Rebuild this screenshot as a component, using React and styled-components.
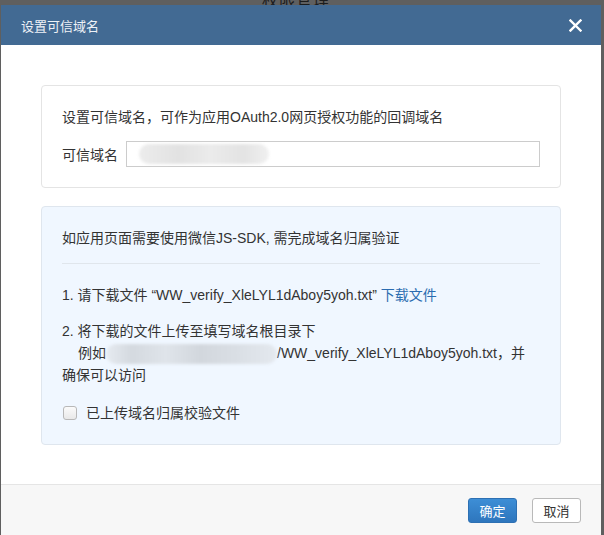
import React from 'react'
import styled, {createGlobalStyle} from 'styled-components';

const GlobalStyle = createGlobalStyle`
  html, body {
    margin: 0;
    padding: 0;
    height: 100%;
    background: #5f5f5f;
    overflow: hidden;
  }
  body {
    font-family: "Liberation Sans", "Noto Sans CJK SC", sans-serif;
    color: #333;
  }
`;

const CloseIcon = () => (
    <svg width="13" height="13" viewBox="0 0 13 13">
        <path d="M1.5 1.5 L11.5 11.5 M11.5 1.5 L1.5 11.5" stroke="#fff" strokeWidth="2.4" strokeLinecap="square"/>
    </svg>
)

const App = () => {
    return (
        <Page>
            <GlobalStyle/>
            <Backdrop>权限管理</Backdrop>
            <Dialog>
                <Header>
                    <Title>设置可信域名</Title>
                    <Close><CloseIcon/></Close>
                </Header>
                <Body>
                    <Card>
                        <Line>设置可信域名，可作为应用OAuth2.0网页授权功能的回调域名</Line>
                        <Field>
                            <Label>可信域名</Label>
                            <Input>
                                <Blur width={130} tone="light"/>
                            </Input>
                        </Field>
                    </Card>
                    <Card tinted>
                        <Line>如应用页面需要使用微信JS-SDK, 需完成域名归属验证</Line>
                        <Divider/>
                        <Step>
                            1. 请下载文件 “WW_verify_XleLYL1dAboy5yoh.txt” <Link>下载文件</Link>
                        </Step>
                        <Step gap={14}>
                            2. 将下载的文件上传至填写域名根目录下<br/>
                            <Indent>例如</Indent><Blur width={171}/>/WW_verify_XleLYL1dAboy5yoh.txt，并<br/>
                            确保可以访问
                        </Step>
                        <Check>
                            <Box/>
                            <span>已上传域名归属校验文件</span>
                        </Check>
                    </Card>
                </Body>
                <Footer>
                    <Button primary>确定</Button>
                    <Button>取消</Button>
                </Footer>
            </Dialog>
        </Page>
    )
}

const Page = styled.div`
  position: relative;
  height: 100vh;
  padding: 5px 3px 0 1px;
  box-sizing: border-box;
`;

const Backdrop = styled.div`
  position: absolute;
  top: -13px;
  left: 262px;
  font-size: 16px;
  color: #1c1c1c;
  letter-spacing: 1px;
`;

const Dialog = styled.div`
  position: relative;
  width: 600px;
  background: #fff;
  display: flex;
  flex-direction: column;
`;

const Header = styled.div`
  height: 40px;
  background: #426a93;
  display: flex;
  align-items: center;
  justify-content: space-between;
  padding: 0 19px 0 20px;
`;

const Title = styled.div`
  color: #eef2f7;
  font-size: 13px;
`;

const Close = styled.div`
  display: flex;
  align-items: center;
  cursor: pointer;
`;

const Body = styled.div`
  padding: 40px 40px 40px 40px;
  display: flex;
  flex-direction: column;
  gap: 18px;
  height: 439px;
  box-sizing: border-box;
`;

const Card = styled.div`
  border: 1px solid ${p => p.tinted ? '#dfe6ee' : '#e4e4e4'};
  background: ${p => p.tinted ? '#f0f7ff' : '#fff'};
  border-radius: 4px;
  padding: 20px 20px 20px;
  font-size: 14px;
`;

const Line = styled.div`
  line-height: 22px;
`;

const Field = styled.div`
  display: flex;
  align-items: center;
  margin-top: 13px;
`;

const Label = styled.div`
  width: 56px;
  margin-right: 8px;
  font-size: 14px;
`;

const Input = styled.div`
  flex: 1;
  height: 26px;
  border: 1px solid #ccc;
  box-sizing: border-box;
  background: #fff;
  display: flex;
  align-items: center;
  padding-left: 12px;
`;

const Blur = styled.span`
  display: inline-block;
  vertical-align: middle;
  width: ${p => p.width}px;
  height: 20px;
  border-radius: 10px;
  filter: blur(1.5px);
  background: ${p => p.tone === 'light'
    ? 'linear-gradient(90deg, #ececec 0%, #e2e2e2 30%, #ebebeb 55%, #e3e3e3 80%, #f0f0f0 100%)'
    : 'linear-gradient(90deg, #e6ebf1 0%, #d4d9df 15%, #dfe4ea 35%, #d2d7dd 55%, #d9dee4 75%, #e4e9ef 100%)'};
`;

const Divider = styled.div`
  height: 1px;
  background: #e0e6ec;
  margin: 14px 0 20px;
`;

const Step = styled.div`
  line-height: 22px;
  margin-top: ${p => p.gap || 0}px;
`;

const Indent = styled.span`
  padding-left: 16px;
`;

const Link = styled.a`
  color: #2b6cb0;
  cursor: pointer;
`;

const Check = styled.label`
  display: flex;
  align-items: center;
  gap: 9px;
  margin-top: 16px;
  line-height: 22px;
  padding-left: 1px;
`;

const Box = styled.span`
  width: 12px;
  height: 12px;
  border: 1px solid #b8b8b8;
  border-radius: 3px;
  background: linear-gradient(#fbfbfb, #e9e9e9);
`;

const Footer = styled.div`
  border-top: 1px solid #e5e5e5;
  background: #f7f7f7;
  height: 60px;
  display: flex;
  justify-content: flex-end;
  align-items: flex-start;
  gap: 15px;
  padding: 13px 20px 0;
  box-sizing: border-box;
`;

const Button = styled.button`
  height: 25px;
  min-width: 49px;
  padding: 0 10px;
  font-family: inherit;
  font-size: 13px;
  border-radius: 3px;
  cursor: pointer;
  border: 1px solid ${p => p.primary ? '#2d70b3' : '#b9b9b9'};
  color: ${p => p.primary ? '#fff' : '#333'};
  background: ${p => p.primary ? 'linear-gradient(#3d8ed6, #2e76bd)' : '#fff'};
`;

export default App;
